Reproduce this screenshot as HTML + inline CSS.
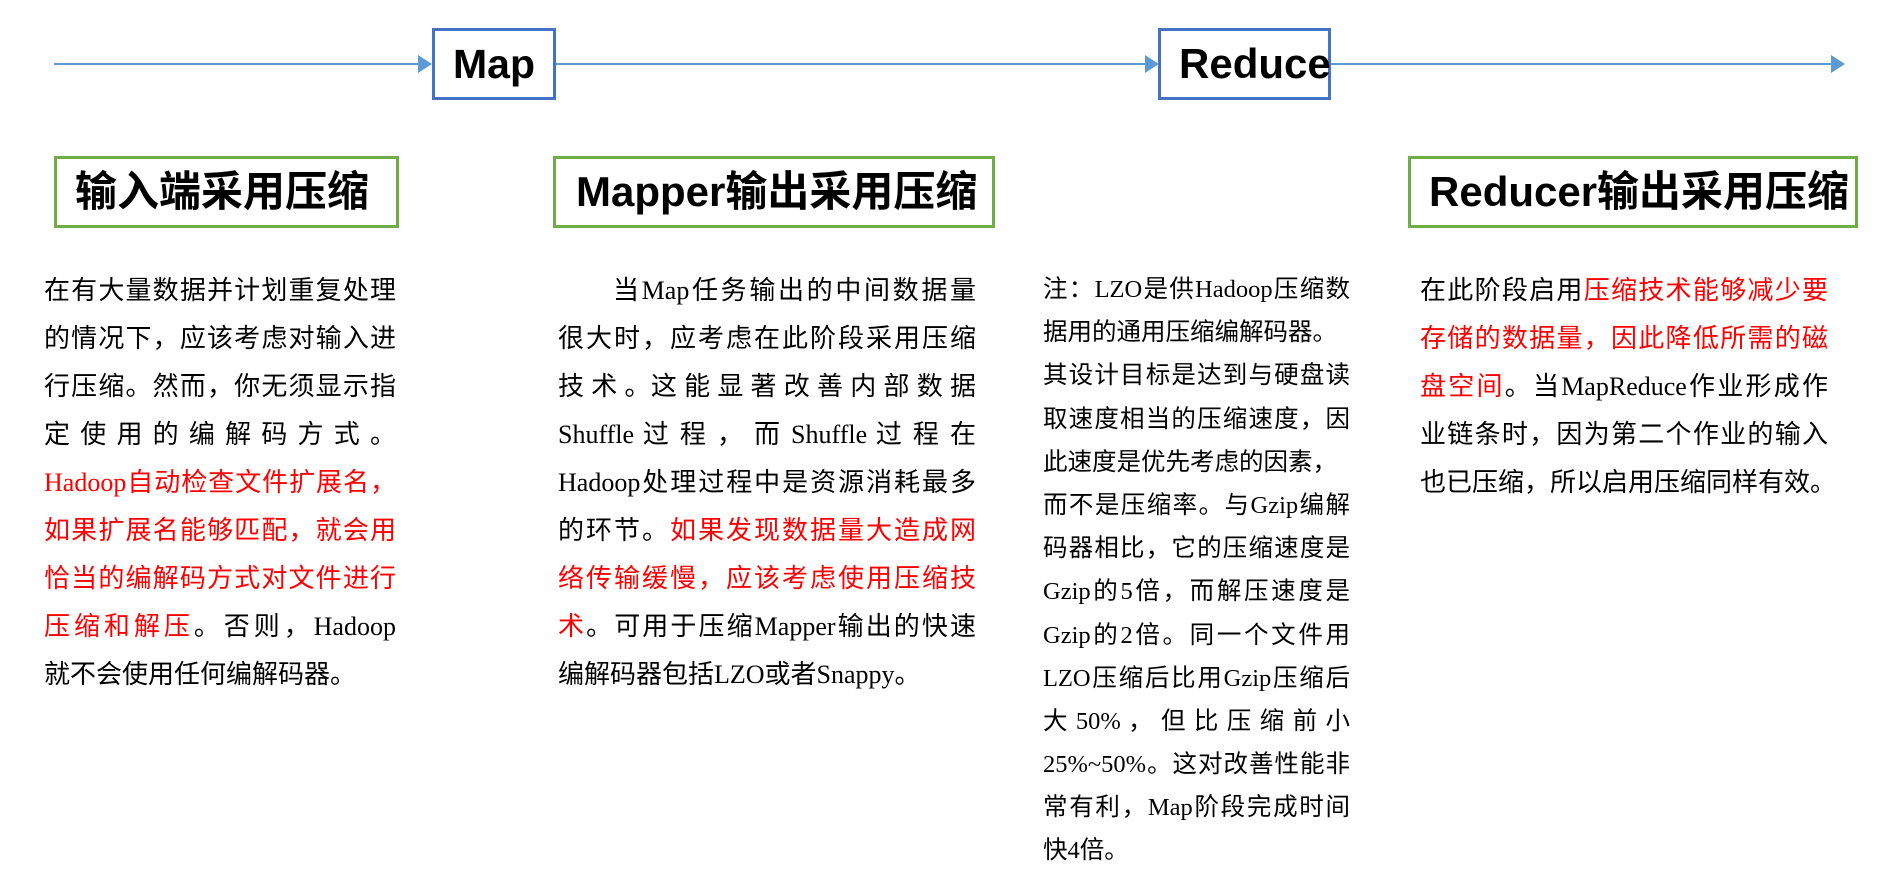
<!DOCTYPE html>
<html><head><meta charset="utf-8"><style>
body{margin:0;width:1879px;height:872px;background:#fff;overflow:hidden;position:relative;font-family:"Liberation Serif","Noto Sans CJK SC",serif;color:#000}
.abs{position:absolute}
.line{position:absolute;height:2px;background:#5b9bd5;top:63px}
.tri{position:absolute;width:0;height:0;border-top:9px solid transparent;border-bottom:9px solid transparent;border-left:14px solid #5b9bd5;top:55px}
.bbox{position:absolute;border:3px solid #4472c4;box-sizing:border-box;font-family:"Liberation Sans",sans-serif;font-weight:bold;font-size:41px;text-align:center;line-height:66px;background:#fff}
.gbox{position:absolute;border:3px solid #70ad47;box-sizing:border-box;font-family:"Liberation Sans","Noto Sans CJK SC",sans-serif;font-weight:bold;font-size:42px;line-height:66px;top:156px;height:72px;white-space:nowrap;overflow:hidden}
.col div{height:48px;line-height:48px;text-align:justify;text-align-last:justify;white-space:nowrap}
.col div.l{text-align-last:left}
.c3 div{height:43.2px;line-height:43.2px}
.r{color:#ff0000}
</style></head><body>
<div class="line" style="left:54px;width:370px"></div>
<div class="tri" style="left:418px"></div>
<div class="line" style="left:555px;width:595px"></div>
<div class="tri" style="left:1145px"></div>
<div class="line" style="left:1330px;width:505px"></div>
<div class="tri" style="left:1831px"></div>
<div class="bbox" style="left:432px;top:28px;width:124px;height:72px">Map</div>
<div class="bbox" style="left:1158px;top:28px;width:173px;height:72px;text-align:left;padding-left:18px;font-size:42px">Reduce</div>

<div class="gbox" style="left:54px;width:345px;padding-left:18px">输入端采用压缩</div>
<div class="gbox" style="left:553px;width:442px;padding-left:20px">Mapper输出采用压缩</div>
<div class="gbox" style="left:1408px;width:450px;padding-left:18px">Reducer输出采用压缩</div>

<div class="abs col" style="left:44px;top:267px;width:352px;font-size:26px">
<div>在有大量数据并计划重复处理</div>
<div>的情况下，应该考虑对输入进</div>
<div>行压缩。然而，你无须显示指</div>
<div>定 使 用 的 编 解 码 方 式 。</div>
<div class="r">Hadoop自动检查文件扩展名，</div>
<div class="r">如果扩展名能够匹配，就会用</div>
<div class="r">恰当的编解码方式对文件进行</div>
<div><span class="r">压缩和解压</span>。否则，Hadoop</div>
<div class="l">就不会使用任何编解码器。</div>
</div>

<div class="abs col" style="left:558px;top:267px;width:418px;font-size:26px">
<div style="padding-left:55px">当Map任务输出的中间数据量</div>
<div>很大时，应考虑在此阶段采用压缩</div>
<div>技 术 。这 能 显 著 改 善 内 部 数 据</div>
<div>Shuffle 过 程 ， 而 Shuffle 过 程 在</div>
<div>Hadoop处理过程中是资源消耗最多</div>
<div>的环节。<span class="r">如果发现数据量大造成网</span></div>
<div class="r">络传输缓慢，应该考虑使用压缩技</div>
<div><span class="r">术</span>。可用于压缩Mapper输出的快速</div>
<div class="l">编解码器包括LZO或者Snappy。</div>
</div>

<div class="abs col c3" style="left:1043px;top:268px;width:307px;font-size:24.5px">
<div>注：LZO是供Hadoop压缩数</div>
<div class="l">据用的通用压缩编解码器。</div>
<div>其设计目标是达到与硬盘读</div>
<div>取速度相当的压缩速度，因</div>
<div class="l">此速度是优先考虑的因素，</div>
<div>而不是压缩率。与Gzip编解</div>
<div>码器相比，它的压缩速度是</div>
<div>Gzip的5倍，而解压速度是</div>
<div>Gzip的2倍。同一个文件用</div>
<div>LZO压缩后比用Gzip压缩后</div>
<div>大 50% ， 但 比 压 缩 前 小</div>
<div>25%~50%。这对改善性能非</div>
<div>常有利，Map阶段完成时间</div>
<div class="l">快4倍。</div>
</div>

<div class="abs col" style="left:1420px;top:267px;width:408px;font-size:26px">
<div>在此阶段启用<span class="r">压缩技术能够减少要</span></div>
<div class="r">存储的数据量，因此降低所需的磁</div>
<div><span class="r">盘空间</span>。当MapReduce作业形成作</div>
<div>业链条时，因为第二个作业的输入</div>
<div class="l">也已压缩，所以启用压缩同样有效。</div>
</div>
</body></html>
